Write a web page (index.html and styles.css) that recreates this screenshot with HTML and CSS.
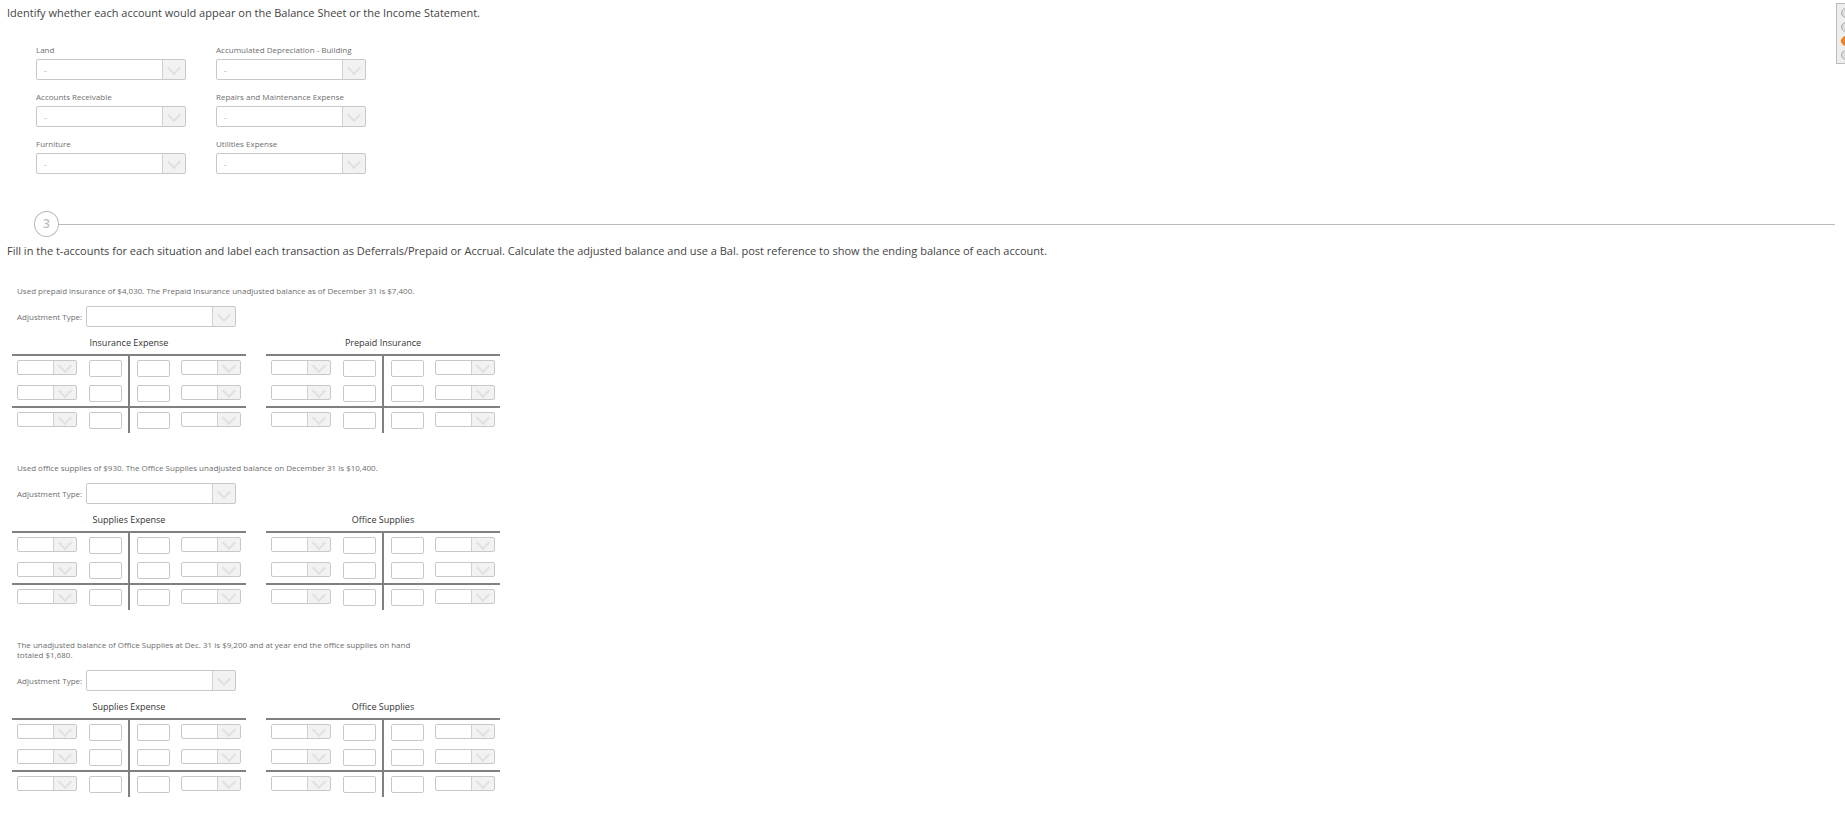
FILE: index.html
```html
<!DOCTYPE html>
<html lang="en">
<head>
  <meta charset="UTF-8" />
  <meta name="viewport" content="width=device-width, initial-scale=1" />
  <title>Adjusting Entries</title>
  <link rel="stylesheet" href="styles.css">
</head>
<body>

  <main>
    <section class="question">
      <h2>Identify whether each account would appear on the Balance Sheet or the Income Statement.</h2>
      <div class="account-grid" id="accountGrid"></div>
    </section>

    <div class="divider"><span class="step">3</span></div>

    <section class="question">
      <h2>Fill in the t-accounts for each situation and label each transaction as Deferrals/Prepaid or Accrual. Calculate the adjusted balance and use a Bal. post reference to show the ending balance of each account.</h2>
      <div id="situations"></div>
    </section>
  </main>

  <nav class="steps" aria-label="Steps">
    <button aria-label="Step 1"></button>
    <button aria-label="Step 2"></button>
    <button aria-label="Step 3" class="active"></button>
    <button aria-label="Step 4"></button>
  </nav>

  <script>
    const accounts = [
      "Land", "Accumulated Depreciation - Building",
      "Accounts Receivable", "Repairs and Maintenance Expense",
      "Furniture", "Utilities Expense"
    ];

    const situations = [
      {
        text: "Used prepaid insurance of $4,030. The Prepaid Insurance unadjusted balance as of December 31 is $7,400.",
        accounts: ["Insurance Expense", "Prepaid Insurance"]
      },
      {
        text: "Used office supplies of $930. The Office Supplies unadjusted balance on December 31 is $10,400.",
        accounts: ["Supplies Expense", "Office Supplies"]
      },
      {
        text: "The unadjusted balance of Office Supplies at Dec. 31 is $9,200 and at year end the office supplies on hand totaled $1,680.",
        accounts: ["Supplies Expense", "Office Supplies"]
      }
    ];

    function refSelect(label) {
      return `<span class="select small"><select aria-label="${label}"><option></option><option>Bal.</option></select></span>`;
    }

    function amount(label) {
      return `<input type="text" class="amount" aria-label="${label}" />`;
    }

    function tAccount(name) {
      let rows = "";
      for (let i = 1; i <= 3; i++) {
        rows += `
          <tr>
            <td>${refSelect(name + " debit reference " + i)}</td>
            <td>${amount(name + " debit " + i)}</td>
            <td>${amount(name + " credit " + i)}</td>
            <td>${refSelect(name + " credit reference " + i)}</td>
          </tr>
        `;
      }
      return `<table class="t-account"><caption>${name}</caption><tbody>${rows}</tbody></table>`;
    }

    document.getElementById("accountGrid").innerHTML = accounts.map((name, i) => `
      <div class="account">
        <label for="account${i}">${name}</label>
        <span class="select">
          <select id="account${i}">
            <option>-</option>
            <option>Balance Sheet</option>
            <option>Income Statement</option>
          </select>
        </span>
      </div>
    `).join("");

    document.getElementById("situations").innerHTML = situations.map((s, i) => `
      <div class="situation">
        <p>${s.text}</p>
        <div class="adjustment">
          <label for="adjustment${i}">Adjustment Type:</label>
          <span class="select">
            <select id="adjustment${i}">
              <option></option>
              <option>Deferrals/Prepaid</option>
              <option>Accrual</option>
            </select>
          </span>
        </div>
        <div class="t-accounts">${s.accounts.map(tAccount).join("")}</div>
      </div>
    `).join("");
  </script>

</body>
</html>
```
FILE: styles.css
```css
* {
  box-sizing: border-box;
}

body {
  margin: 0;
  font-family: 'Open Sans', sans-serif;
  font-size: 8px;
  line-height: 10px;
  color: #6e6e6e;
  background: white;
}

main {
  padding: 4px 10px 0 7px;
}

h2 {
  margin: 0;
  font-size: 11px;
  line-height: 18px;
  font-weight: 400;
  color: #444;
}

/* Selects with a grey arrow box */
.select {
  position: relative;
  display: inline-block;
  width: 150px;
  height: 21px;
  vertical-align: top;
}

.select select {
  appearance: none;
  display: block;
  width: 100%;
  height: 100%;
  margin: 0;
  padding: 0 24px 0 7px;
  border: 1px solid #c8c8c8;
  border-radius: 2px;
  background: linear-gradient(to left, #f2f2f2 22px, #d0d0d0 22px, #d0d0d0 23px, white 23px);
  font-family: inherit;
  font-size: 8px;
  color: #999;
}

.select::after {
  content: "";
  position: absolute;
  top: 4px;
  right: 7px;
  width: 8px;
  height: 8px;
  border-right: 2px solid #e0e0e0;
  border-bottom: 2px solid #e0e0e0;
  transform: rotate(45deg);
  pointer-events: none;
}

.select.small {
  width: 60px;
  height: 15px;
}

.select.small::after {
  top: 1px;
}

/* Account classification */
.account-grid {
  display: grid;
  grid-template-columns: 150px 150px;
  column-gap: 30px;
  row-gap: 12px;
  padding: 23px 0 0 29px;
}

.account label {
  display: block;
  margin-bottom: 4px;
  white-space: nowrap;
}

/* Numbered divider */
.divider {
  display: flex;
  align-items: center;
  margin: 37px 0 5px;
  padding-left: 27px;
}

.divider::after {
  content: "";
  flex: 1;
  height: 1px;
  background: #bbb;
}

.step {
  width: 25px;
  height: 26px;
  border: 1px solid #bbb;
  border-radius: 50%;
  font-size: 12px;
  line-height: 23px;
  font-weight: 600;
  text-align: center;
  color: #bbb;
}

/* T-accounts */
.situation {
  padding: 26px 0 0 5px;
}

.situation + .situation {
  padding-top: 30px;
}

.situation p {
  max-width: 410px;
  margin: 0 0 10px;
  padding-left: 5px;
}

.adjustment {
  display: flex;
  align-items: center;
  gap: 4px;
  padding-left: 5px;
}

.t-accounts {
  display: flex;
  gap: 20px;
  padding-top: 8px;
}

.t-account {
  border-spacing: 0;
}

.t-account caption {
  padding-bottom: 3px;
  font-size: 9px;
  line-height: 16px;
  color: #333;
}

.t-account td {
  padding: 4px 0 4px 5px;
  height: 25px;
  line-height: 0;
  vertical-align: top;
}

.t-account tr:first-child td,
.t-account tr:last-child td {
  height: 27px;
  border-top: 2px solid #808080;
}

.t-account td:nth-child(1) {
  width: 72px;
}

.t-account td:nth-child(2) {
  padding-right: 6px;
  border-right: 2px solid #808080;
}

.t-account td:nth-child(3) {
  padding-left: 7px;
}

.t-account td:nth-child(4) {
  padding-left: 11px;
  padding-right: 5px;
}

.amount {
  width: 33px;
  height: 17px;
  margin: 0;
  padding: 0 2px;
  border: 1px solid #c8c8c8;
  border-radius: 2px;
  font-family: inherit;
  font-size: 8px;
}

/* Step list cut off by the window edge */
.steps {
  position: fixed;
  top: 3px;
  right: 0;
  display: flex;
  flex-direction: column;
  gap: 4px;
  width: 9px;
  padding: 4px 0 3px 4px;
  border: 1px solid #bbb;
  border-right: 0;
  background: #eee;
  overflow: hidden;
}

.steps button {
  flex-shrink: 0;
  width: 10px;
  height: 10px;
  padding: 0;
  border: 1px solid #aaa;
  border-radius: 50%;
  background: #ddd;
}

.steps button.active {
  border-color: #e67e22;
  background: #f58220;
}
```
